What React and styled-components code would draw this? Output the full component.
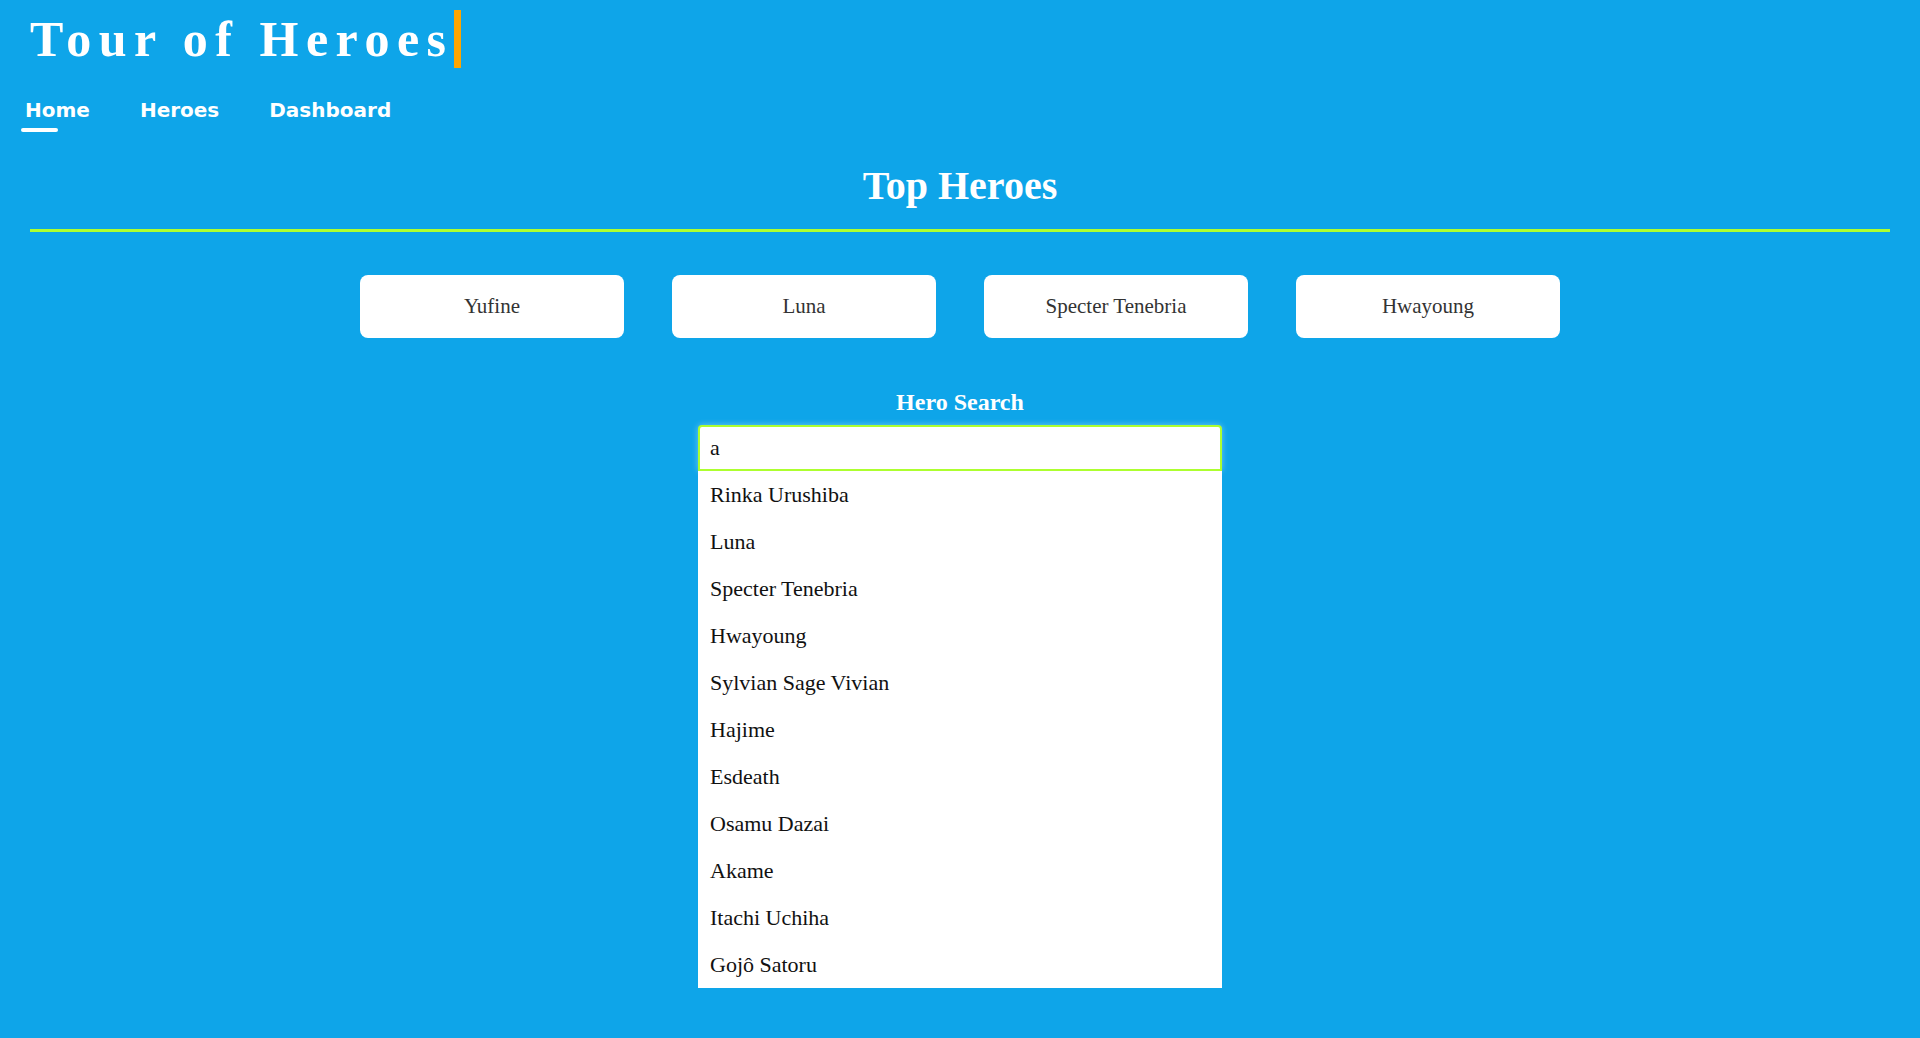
import React from 'react';
import styled, { createGlobalStyle } from 'styled-components';

const GlobalStyle = createGlobalStyle`
  html, body {
    margin: 0;
    padding: 0;
    background: #0ea5e9;
  }
  * {
    box-sizing: border-box;
  }
`;

// Toàn bộ trang
const Page = styled.div`
  min-height: 100vh;
  background: #0ea5e9;
  padding-top: 10px;
  overflow: hidden;
`;

const Title = styled.h1`
  display: inline-block;
  margin: 0 0 0 30px;
  font-family: 'Liberation Serif', 'Times New Roman', serif;
  font-size: 50px;
  line-height: 58px;
  font-weight: bold;
  letter-spacing: 7.5px;
  color: #fff;
  white-space: nowrap;
  border-right: 7px solid #ffa500;
`;

const Nav = styled.nav`
  display: flex;
  gap: 50px;
  margin: 30px 0 0 25px;
`;

const NavLink = styled.a`
  position: relative;
  font-family: 'DejaVu Sans', Verdana, sans-serif;
  font-size: 20px;
  line-height: 24px;
  font-weight: bold;
  color: #fff;
  text-decoration: none;
  cursor: pointer;

  &::after {
    content: '';
    display: ${(p) => (p.$active ? 'block' : 'none')};
    position: absolute;
    left: -4px;
    top: 30px;
    width: 37px;
    height: 4px;
    border-radius: 2px;
    background: #fff;
  }
`;

const Heading = styled.h2`
  margin: 41px 0 0;
  text-align: center;
  font-family: 'Liberation Serif', 'Times New Roman', serif;
  font-size: 40px;
  line-height: 46px;
  font-weight: bold;
  color: #fff;
`;

const Divider = styled.div`
  height: 3px;
  margin: 20px 30px 0;
  background: #adff2f;
`;

const CardRow = styled.div`
  display: flex;
  justify-content: center;
  gap: 48px;
  margin-top: 43px;
`;

const HeroCard = styled.a`
  display: flex;
  align-items: center;
  justify-content: center;
  width: 264px;
  height: 63px;
  border-radius: 8px;
  background: #fff;
  color: #333;
  font-family: 'Liberation Serif', 'Times New Roman', serif;
  font-size: 21px;
  text-decoration: none;
  cursor: pointer;
`;

const SearchBox = styled.div`
  display: flex;
  flex-direction: column;
  align-items: center;
  margin-top: 50px;
`;

const SearchLabel = styled.label`
  font-family: 'Liberation Serif', 'Times New Roman', serif;
  font-size: 24px;
  line-height: 28px;
  font-weight: bold;
  color: #fff;
  margin-bottom: 9px;
`;

const SearchInput = styled.input`
  width: 524px;
  height: 46px;
  padding: 0 10px;
  border: 2px solid #adff2f;
  border-radius: 4px 4px 0 0;
  outline: none;
  background: #fff;
  color: #111;
  font-family: 'Liberation Serif', Georgia, serif;
  font-size: 22px;
  box-shadow: 0 0 6px rgba(255, 255, 255, 0.4);
`;

const ResultList = styled.ul`
  width: 524px;
  margin: 0;
  padding: 0;
  list-style: none;
  background: #fff;
`;

const ResultItem = styled.li`
  height: 47px;
  padding-left: 12px;
  font-family: 'Liberation Serif', Georgia, serif;
  font-size: 22px;
  line-height: 47px;
  color: #111;
  cursor: pointer;
`;

const topHeroes = ['Yufine', 'Luna', 'Specter Tenebria', 'Hwayoung'];

const results = [
  'Rinka Urushiba',
  'Luna',
  'Specter Tenebria',
  'Hwayoung',
  'Sylvian Sage Vivian',
  'Hajime',
  'Esdeath',
  'Osamu Dazai',
  'Akame',
  'Itachi Uchiha',
  'Gojô Satoru',
];

const App = () => {
  return (
    <Page>
      <GlobalStyle />
      <Title>Tour of Heroes</Title>
      <Nav>
        <NavLink $active>Home</NavLink>
        <NavLink>Heroes</NavLink>
        <NavLink>Dashboard</NavLink>
      </Nav>

      <Heading>Top Heroes</Heading>
      <Divider />

      <CardRow>
        {topHeroes.map((name) => (
          <HeroCard key={name}>{name}</HeroCard>
        ))}
      </CardRow>

      <SearchBox>
        <SearchLabel htmlFor="search-box">Hero Search</SearchLabel>
        <SearchInput id="search-box" defaultValue="a" />
        <ResultList>
          {results.map((name) => (
            <ResultItem key={name}>{name}</ResultItem>
          ))}
        </ResultList>
      </SearchBox>
    </Page>
  );
};

export default App;
